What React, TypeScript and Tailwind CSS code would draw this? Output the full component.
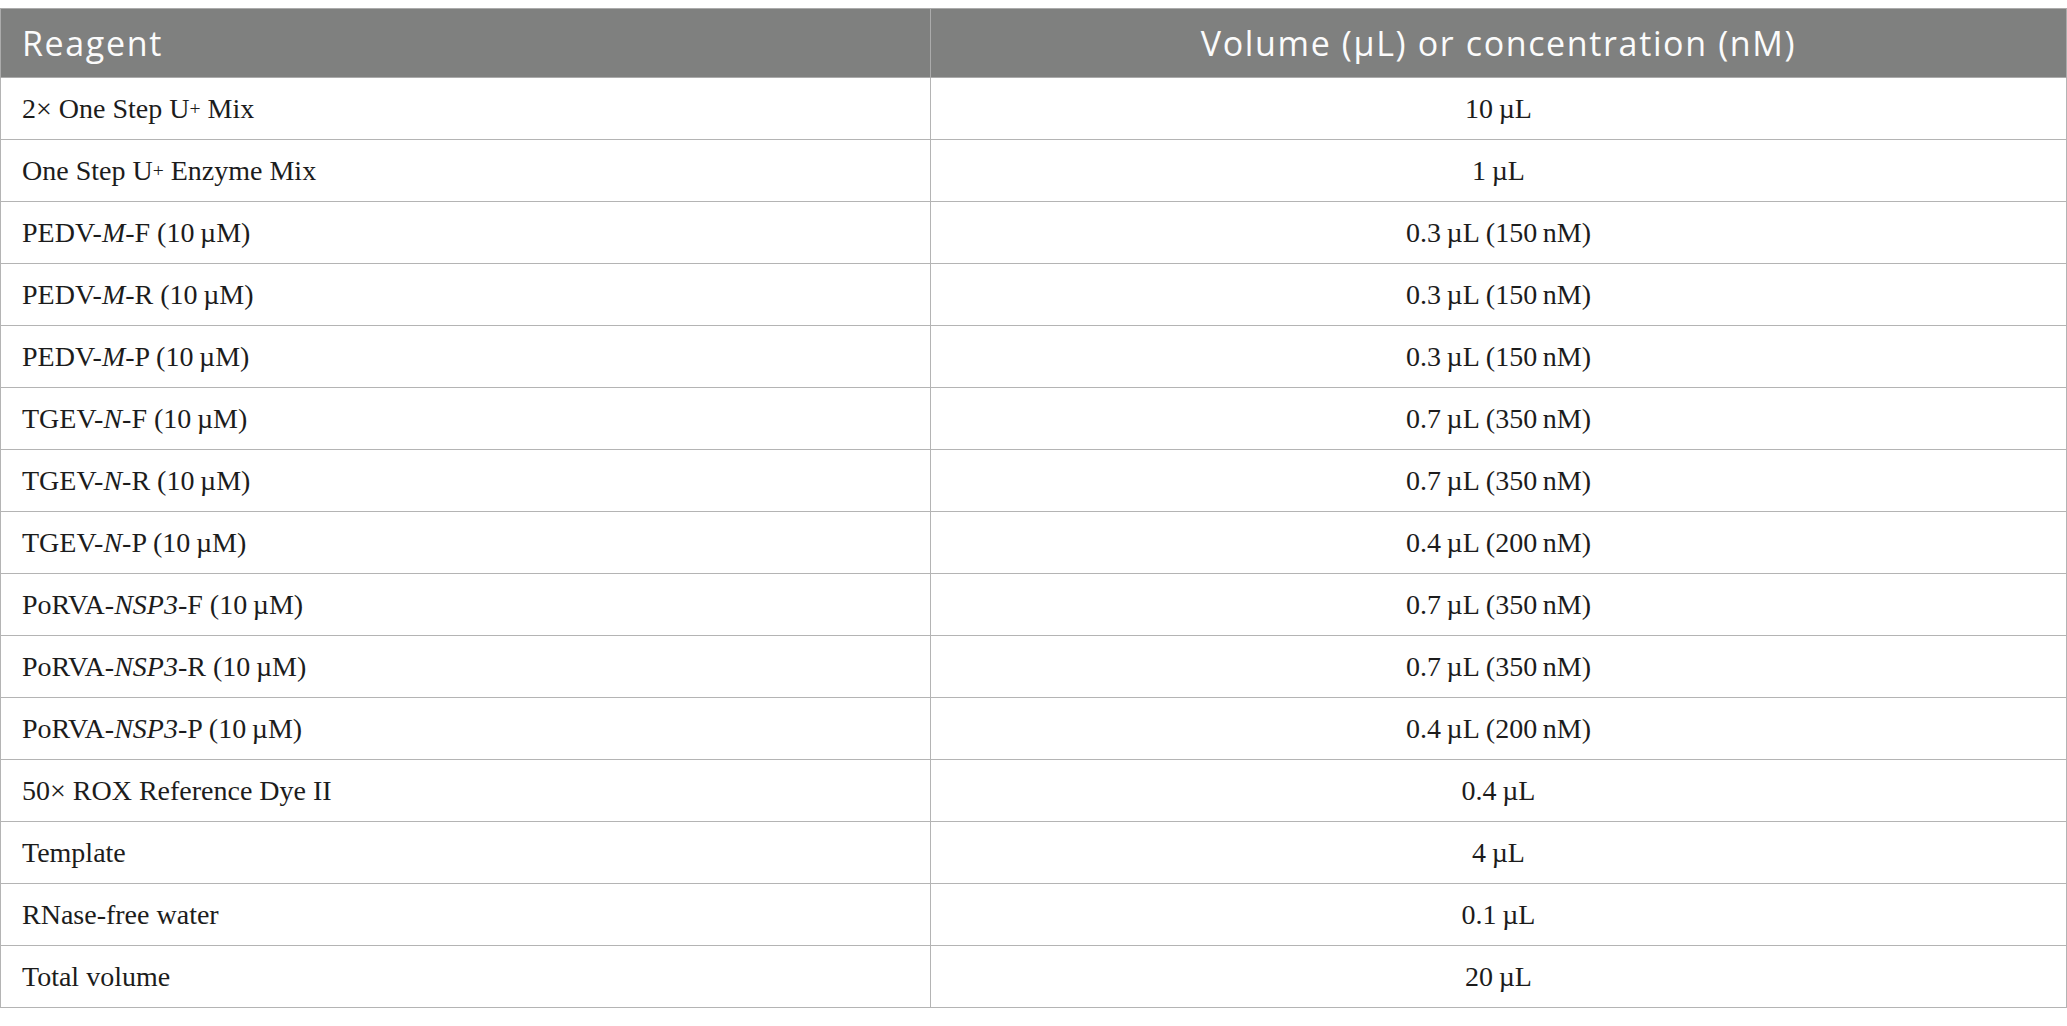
import React from 'react';

type Row = { name: React.ReactNode; value: string };

const T = '\u2009';

const rows: Row[] = [
  { name: <>2× One Step U<sup className="text-[0.7em] relative -top-[0.12em]">+</sup> Mix</>, value: `10${T}µL` },
  { name: <>One Step U<sup className="text-[0.7em] relative -top-[0.12em]">+</sup> Enzyme Mix</>, value: `1${T}µL` },
  { name: <>PEDV-<i>M</i>-F (10{T}µM)</>, value: `0.3${T}µL (150${T}nM)` },
  { name: <>PEDV-<i>M</i>-R (10{T}µM)</>, value: `0.3${T}µL (150${T}nM)` },
  { name: <>PEDV-<i>M</i>-P (10{T}µM)</>, value: `0.3${T}µL (150${T}nM)` },
  { name: <>TGEV-<i>N</i>-F (10{T}µM)</>, value: `0.7${T}µL (350${T}nM)` },
  { name: <>TGEV-<i>N</i>-R (10{T}µM)</>, value: `0.7${T}µL (350${T}nM)` },
  { name: <>TGEV-<i>N</i>-P (10{T}µM)</>, value: `0.4${T}µL (200${T}nM)` },
  { name: <>PoRVA-<i>NSP3</i>-F (10{T}µM)</>, value: `0.7${T}µL (350${T}nM)` },
  { name: <>PoRVA-<i>NSP3</i>-R (10{T}µM)</>, value: `0.7${T}µL (350${T}nM)` },
  { name: <>PoRVA-<i>NSP3</i>-P (10{T}µM)</>, value: `0.4${T}µL (200${T}nM)` },
  { name: <>50× ROX Reference Dye II</>, value: `0.4${T}µL` },
  { name: <>Template</>, value: `4${T}µL` },
  { name: <>RNase-free water</>, value: `0.1${T}µL` },
  { name: <>Total volume</>, value: `20${T}µL` },
];

export default function App() {
  return (
    <div className="w-[2067px] h-[1026px] bg-white pt-[8px]">
      <table className="w-[2067px] border-collapse table-fixed">
        <colgroup>
          <col className="w-[930px]" />
          <col />
        </colgroup>
        <thead>
          <tr className="bg-[#7f807f] h-[69px]">
            <th className="border border-[#ababab] text-left font-normal pl-[21px] text-[34px] text-[#fbfbfb] font-['Open_Sans',sans-serif] tracking-[0.048em]">
              Reagent
            </th>
            <th className="border border-[#ababab] text-center font-normal text-[34px] text-[#fbfbfb] font-['Open_Sans',sans-serif] tracking-[0.048em]">
              Volume (µL) or concentration (nM)
            </th>
          </tr>
        </thead>
        <tbody className="font-['Liberation_Serif',serif] text-[28px] text-[#1c1c1c]">
          {rows.map((r, i) => (
            <tr key={i} className="h-[62px]">
              <td className="border border-[#b4b4b4] pl-[21px]">{r.name}</td>
              <td className="border border-[#b4b4b4] text-center">{r.value}</td>
            </tr>
          ))}
        </tbody>
      </table>
    </div>
  );
}
